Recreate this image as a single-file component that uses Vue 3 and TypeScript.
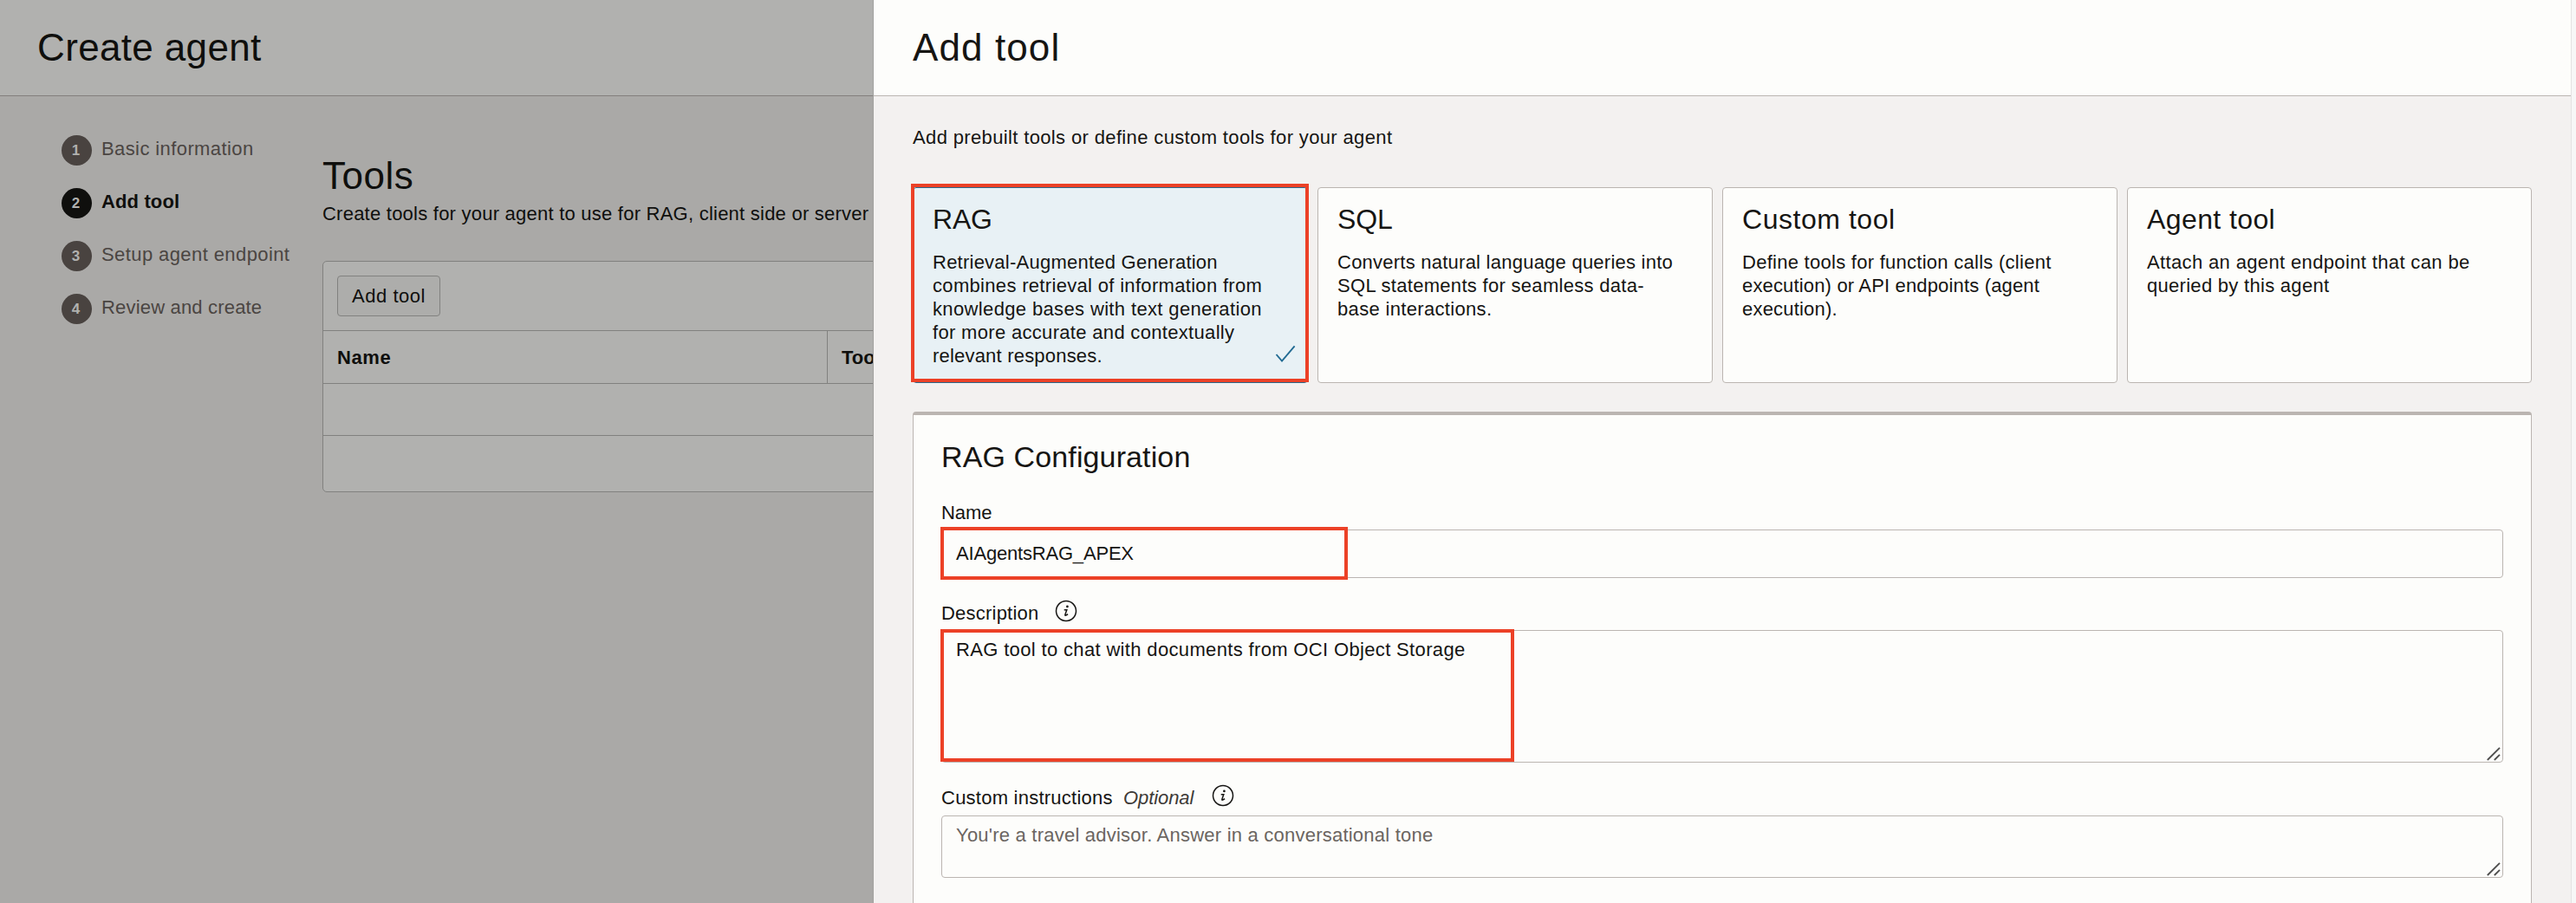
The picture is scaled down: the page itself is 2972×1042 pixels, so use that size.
<script setup lang="ts">
interface Line { text: string; track: number }
interface ToolCard { title: string; track: number; lines: Line[]; selected?: boolean }

const steps = [
  { label: 'Basic information', track: 0.4, active: false },
  { label: 'Add tool', track: 0.13, active: true },
  { label: 'Setup agent endpoint', track: 0.41, active: false },
  { label: 'Review and create', track: 0.18, active: false },
]

const cards: ToolCard[] = [
  {
    title: 'RAG',
    track: -0.2,
    selected: true,
    lines: [
      { text: 'Retrieval-Augmented Generation', track: 0.24 },
      { text: 'combines retrieval of information from', track: 0.32 },
      { text: 'knowledge bases with text generation', track: 0.36 },
      { text: 'for more accurate and contextually', track: 0.32 },
      { text: 'relevant responses.', track: 0.2 },
    ],
  },
  {
    title: 'SQL',
    track: -0.1,
    lines: [
      { text: 'Converts natural language queries into', track: 0.24 },
      { text: 'SQL statements for seamless data-', track: 0.3 },
      { text: 'base interactions.', track: 0.33 },
    ],
  },
  {
    title: 'Custom tool',
    track: 0.54,
    lines: [
      { text: 'Define tools for function calls (client', track: 0.27 },
      { text: 'execution) or API endpoints (agent', track: 0.16 },
      { text: 'execution).', track: 0.2 },
    ],
  },
  {
    title: 'Agent tool',
    track: 0.4,
    lines: [
      { text: 'Attach an agent endpoint that can be', track: 0.36 },
      { text: 'queried by this agent', track: 0.29 },
    ],
  },
]
</script>

<template>
  <div class="page">
    <section class="wizard">
      <header class="bar"><h1 class="t-create">Create agent</h1></header>
      <div class="wizard-body">
        <ol class="steps">
          <li v-for="(s, i) in steps" :key="s.label" :class="{ active: s.active }">
            <span class="num">{{ i + 1 }}</span>
            <span class="step-label" :style="{ letterSpacing: s.track + 'px' }">{{ s.label }}</span>
          </li>
        </ol>
        <div class="tools">
          <h2>Tools</h2>
          <p class="tools-desc">Create tools for your agent to use for RAG, client side or server</p>
          <div class="table">
            <div class="toolbar"><button type="button">Add tool</button></div>
            <div class="thead">
              <div class="th first">Name</div>
              <div class="th">Too</div>
            </div>
            <div class="trow"></div>
            <div class="tfoot"></div>
          </div>
        </div>
      </div>
    </section>

    <section class="drawer">
      <header class="bar"><h1 class="t-add">Add tool</h1></header>
      <div class="drawer-body">
        <p class="lead">Add prebuilt tools or define custom tools for your agent</p>
        <div class="cards">
          <article v-for="c in cards" :key="c.title" class="card" :class="{ selected: c.selected }">
            <h3 :style="{ letterSpacing: c.track + 'px' }">{{ c.title }}</h3>
            <p>
              <span v-for="l in c.lines" :key="l.text" class="line" :style="{ letterSpacing: l.track + 'px' }">{{ l.text }}</span>
            </p>
            <svg v-if="c.selected" class="check" width="24" height="22" viewBox="0 0 24 22">
              <path d="M1.5 11 8 18.6 22.6 1.4" fill="none" stroke="#226b93" stroke-width="1.9" />
            </svg>
            <i v-if="c.selected" class="mark mark-card"></i>
          </article>
        </div>

        <div class="config">
          <h2>RAG Configuration</h2>
          <div class="label name-label"><span class="l-name">Name</span></div>
          <div class="field input">
            <span class="v-name">AIAgentsRAG_APEX</span>
            <i class="mark mark-name"></i>
          </div>

          <div class="label"><span class="l-desc">Description</span>
            <svg class="info" width="26" height="26" viewBox="0 0 26 26">
              <circle cx="13" cy="13" r="11.5" fill="none" stroke="#161513" stroke-width="1.5" />
              <circle cx="14.4" cy="7.9" r="1.35" fill="#161513" />
              <path d="M10.7 11.7h3.1l-1.9 5.4q-.3 1.2.7 1 1.2-.3 2.4-1.5" fill="none" stroke="#161513" stroke-width="1.5" />
            </svg>
          </div>
          <div class="field area tall">
            <span class="v-desc">RAG tool to chat with documents from OCI Object Storage</span>
            <svg class="grip" width="16" height="16" viewBox="0 0 16 16">
              <path d="M.8 15 15 .8M8.8 15 15 8.8" fill="none" stroke="#4d4d4c" stroke-width="1.8" />
            </svg>
            <i class="mark mark-desc"></i>
          </div>

          <div class="label"><span class="l-custom">Custom instructions</span><em>Optional</em>
            <svg class="info" width="26" height="26" viewBox="0 0 26 26">
              <circle cx="13" cy="13" r="11.5" fill="none" stroke="#161513" stroke-width="1.5" />
              <circle cx="14.4" cy="7.9" r="1.35" fill="#161513" />
              <path d="M10.7 11.7h3.1l-1.9 5.4q-.3 1.2.7 1 1.2-.3 2.4-1.5" fill="none" stroke="#161513" stroke-width="1.5" />
            </svg>
          </div>
          <div class="field area short">
            <span class="placeholder">You're a travel advisor. Answer in a conversational tone</span>
            <svg class="grip" width="16" height="16" viewBox="0 0 16 16">
              <path d="M.8 15 15 .8M8.8 15 15 8.8" fill="none" stroke="#4d4d4c" stroke-width="1.8" />
            </svg>
          </div>
        </div>
      </div>
    </section>
    <div class="gutter"></div>
  </div>
</template>

<style scoped>
* { box-sizing: border-box; }
h1, h2, h3, p, ol { margin: 0; padding: 0; font-weight: 400; }
.page {
  display: flex;
  width: 2972px;
  height: 1042px;
  overflow: hidden;
  font: 22px/27px "Liberation Sans", Arial, sans-serif;
  color: #161513;
  white-space: nowrap;
}
.bar { height: 111px; padding-top: 28px; border-bottom: 1px solid #bbb5b1; background: #fdfdfb; }
h1 { font-size: 44px; line-height: 53px; }

.wizard { width: 1008px; height: 1042px; flex: none; overflow: hidden; background: #aaa9a7; color: #0f0f0d; border-right: 1px solid #a2a19f; }
.wizard .bar { padding-left: 43px; background: #b1b1af; border-color: #837f7c; }
.t-create { letter-spacing: .35px; }
.wizard-body { display: flex; }
.steps { width: 301px; margin: 45px 0 0 71px; flex: none; list-style: none; }
.steps li { display: flex; height: 61px; color: #4a4542; }
.num { width: 35px; height: 35px; margin-right: 11px; padding-right: 2px; border-radius: 50%; background: #494340; color: #b1b1af; font-size: 17px; line-height: 35px; font-weight: 700; text-align: center; }
.step-label { padding-top: 2px; }
.steps .active { color: #0f0f0d; font-weight: 700; }
.active .num { background: #0f0f0d; }

.tools { padding-top: 65px; }
.tools h2 { font-size: 44px; line-height: 53px; letter-spacing: .5px; }
.tools-desc { margin-top: 4px; letter-spacing: .235px; }
.table { width: 1200px; margin-top: 41px; border: 1px solid #81817f; border-radius: 5px; background: #b1b1af; }
.toolbar { height: 80px; padding: 16px; border-bottom: 1px solid #81817f; }
.toolbar button { display: block; width: 119px; height: 47px; padding: 0; border: 1px solid #81817f; border-radius: 4px; background: #adadab; color: #0f0f0d; font: 22px/45px "Liberation Sans", Arial, sans-serif; letter-spacing: .55px; }
.thead { display: flex; height: 61px; border-bottom: 1px solid #81817f; font-weight: 700; line-height: 61px; }
.th { padding-left: 16px; letter-spacing: 0; }
.th.first { width: 582px; border-right: 1px solid #81817f; letter-spacing: .6px; }
.trow { height: 60px; border-bottom: 1px solid #81817f; }
.tfoot { height: 64px; }

.drawer { width: 1958px; flex: none; background: #f3f1f0; }
.drawer .bar { padding-left: 45px; }
.t-add { letter-spacing: 1.1px; }
.drawer-body { padding: 34px 45px 0; }
.lead { letter-spacing: .36px; }
.cards { display: flex; gap: 11px; margin-top: 44px; }
.card { position: relative; width: 456px; height: 226px; padding: 16px 22px; border: 1px solid #bbb5b1; border-radius: 4px; background: #fdfdfb; }
.card:last-child { width: 467px; }
.card h3 { margin-bottom: 16px; font-size: 32px; line-height: 40px; }
.line { display: block; }
.selected { border-color: #2a698c; background: #e8f1f5; }
.check { position: absolute; left: 417px; top: 181px; }
.mark { position: absolute; border: 4px solid #ec4127; }
.mark-card { left: -3px; top: -5px; width: 459px; height: 229px; }

.config { width: 1868px; height: 620px; margin-top: 33px; padding: 28px 32px 0; border: 1px solid #bbb5b1; border-top-width: 4px; border-radius: 4px; background: #fdfdfb; }
.config h2 { font-size: 34px; line-height: 40px; letter-spacing: .12px; }
.label { display: flex; align-items: flex-start; height: 27px; margin-top: 27px; }
.name-label { margin-top: 31px; }
.l-name { letter-spacing: -.1px; }
.l-desc { width: 131px; letter-spacing: .22px; }
.l-custom { width: 210px; letter-spacing: .24px; }
.label em { width: 102px; color: #3d3a37; letter-spacing: -.08px; }
.info { margin-top: -2px; }
.field { position: relative; border: 1px solid #bbb5b1; border-radius: 4px; background: #fdfdfb; padding: 8px 16px; }
.input { height: 56px; margin-top: 6px; padding: 0 16px; line-height: 53px; }
.tall { height: 153px; margin-top: 6px; }
.short { height: 72px; margin-top: 7px; }
.v-name { letter-spacing: -.19px; }
.v-desc { letter-spacing: .345px; }
.placeholder { color: #6b6561; letter-spacing: .225px; }
.grip { position: absolute; right: 2px; bottom: 1px; }
.mark-name { left: -2px; top: -4px; width: 470px; height: 61px; }
.mark-desc { left: -2px; top: -2px; width: 662px; height: 153px; }
.gutter { flex: 1; border-left: 1px solid #e4e3e3; background: #f7f7f7; }
</style>

<style>
body { overflow: hidden; }
</style>
